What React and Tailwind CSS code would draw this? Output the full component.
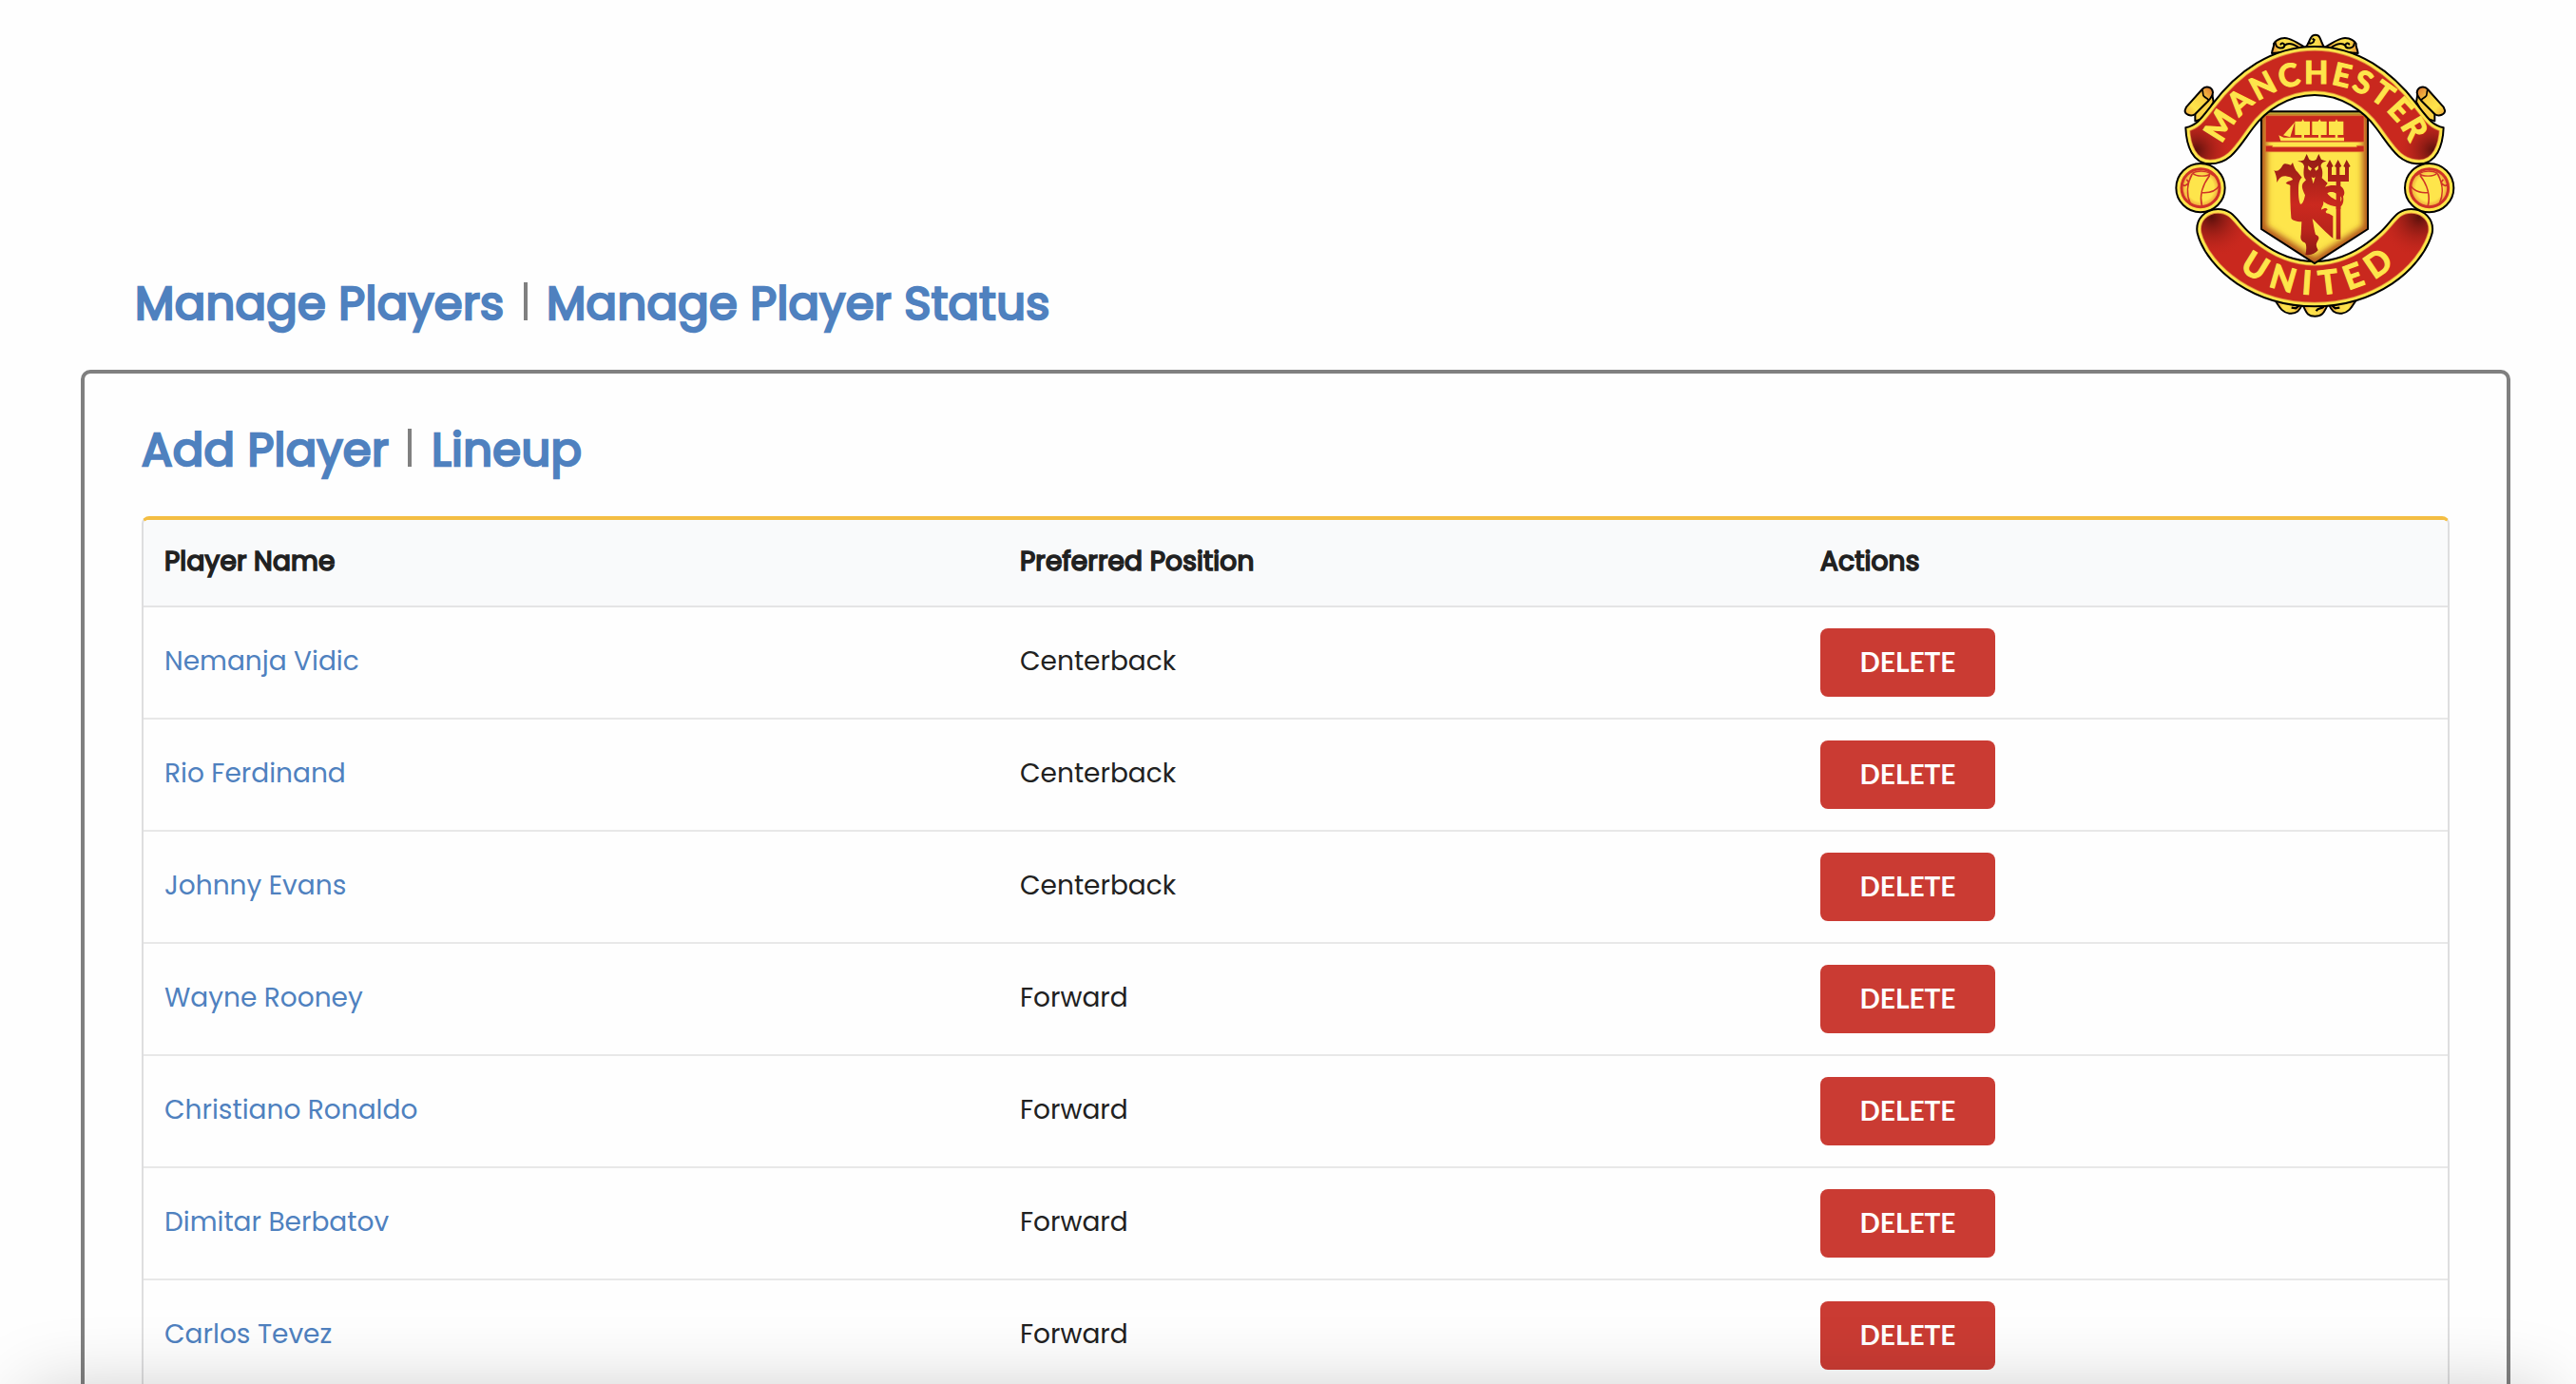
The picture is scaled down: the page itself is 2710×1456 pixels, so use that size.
const players = [
  { name: "Nemanja Vidic", position: "Centerback" },
  { name: "Rio Ferdinand", position: "Centerback" },
  { name: "Johnny Evans", position: "Centerback" },
  { name: "Wayne Rooney", position: "Forward" },
  { name: "Christiano Ronaldo", position: "Forward" },
  { name: "Dimitar Berbatov", position: "Forward" },
  { name: "Carlos Tevez", position: "Forward" },
];

const TOP_RIBBON =
  "M88 343 C125 335 140 310 170 272 C250 165 360 87 495 87 C630 87 740 165 820 272 C850 310 865 335 902 343 C900 400 880 457 825 457 C760 457 735 405 690 345 C650 290 580 240 495 240 C410 240 340 290 300 345 C255 405 230 457 165 457 C110 457 90 400 88 343Z";
const BOTTOM_RIBBON =
  "M125 676 C117 632 150 600 190 600 C240 600 250 640 290 675 C350 730 420 765 495 765 C570 765 640 730 700 675 C740 640 750 600 800 600 C840 600 874 632 866 676 C850 735 800 795 740 835 C660 888 580 907 495 907 C410 907 330 888 250 835 C190 795 140 735 125 676Z";
const SHIELD = "M327 292 H663 V663 L495 771 L327 663Z";

function Ribbon({ d, clip, shade }) {
  return (
    <g>
      <path d={d} fill="#c9281e" />
      <path d={d} fill={`url(#${shade}-left)`} />
      <path d={d} fill={`url(#${shade}-right)`} />
      <g clipPath={`url(#${clip})`} fill="none">
        <path d={d} stroke="#e08a3a" strokeWidth="28" />
        <path d={d} stroke="#fee54b" strokeWidth="23" />
      </g>
      <path d={d} fill="none" stroke="#000" strokeWidth="6" strokeLinejoin="round" />
    </g>
  );
}

function Ball() {
  return (
    <g fill="none" stroke="#cf3427" strokeLinecap="round">
      <circle cx="135" cy="533" r="77" fill="#fee54b" stroke="#000" strokeWidth="6" />
      <circle cx="135" cy="533" r="60" fill="url(#ball)" strokeWidth="9" />
      <path d="M110 486 C125 478 150 478 166 487 C160 498 120 499 110 486Z" strokeWidth="4" />
      <path d="M108 490 C92 520 90 555 103 583 M163 495 C140 525 132 560 139 588 M139 548 C165 550 185 540 194 526 M92 508 L98 516 C90 526 84 528 80 524" strokeWidth="5" />
      <path d="M166 487 L176 494" strokeWidth="4" />
    </g>
  );
}

function SideScroll() {
  return (
    <g stroke="#000" strokeWidth="6" strokeLinejoin="round">
      <path d="M118 322 L118 300 L150 258 L172 238 L176 262 L160 290 L136 316Z" fill="#fbd245" />
      <path d="M90 278 L140 222 C150 210 172 212 174 232 C174 246 166 250 160 258 L118 300 C104 310 84 300 86 288Z" fill="url(#scroll)" />
      <path d="M140 224 C146 230 138 240 148 246 C154 250 162 252 160 258" fill="none" strokeWidth="5" />
    </g>
  );
}

function UpperFlourish() {
  return (
    <g>
      <path
        d="M360 108 C362 92 368 88 366 78 C378 60 400 58 412 62 C432 68 448 80 462 88 L462 100Z"
        fill="url(#flourish)" stroke="#000" strokeWidth="6" strokeLinejoin="round"
      />
      <path d="M372 78 C374 94 398 96 400 84 C400 76 390 74 388 80 M400 84 C412 72 432 82 442 88" fill="none" stroke="#000" strokeWidth="6" strokeLinecap="round" />
    </g>
  );
}

function LowerFlourish() {
  return (
    <g>
      <path
        d="M370 888 C380 900 388 926 415 929 C440 932 448 918 456 902Z"
        fill="url(#flourish)" stroke="#000" strokeWidth="6" strokeLinejoin="round"
      />
      <path d="M422 911 L436 913 L446 904" fill="none" stroke="#000" strokeWidth="7" />
    </g>
  );
}

function Crest() {
  return (
    <svg viewBox="0 0 990 990" className="size-[330px]" role="img" aria-label="Manchester United">
      <defs>
        <clipPath id="clip-top"><path d={TOP_RIBBON} /></clipPath>
        <clipPath id="clip-bottom"><path d={BOTTOM_RIBBON} /></clipPath>
        <clipPath id="clip-shield"><path d={SHIELD} /></clipPath>
        <radialGradient id="top-left" gradientUnits="userSpaceOnUse" cx="120" cy="415" r="115">
          <stop offset="0" stopColor="#5a100b" /><stop offset="1" stopColor="#c9281e" stopOpacity="0" />
        </radialGradient>
        <radialGradient id="top-right" gradientUnits="userSpaceOnUse" cx="870" cy="415" r="115">
          <stop offset="0" stopColor="#5a100b" /><stop offset="1" stopColor="#c9281e" stopOpacity="0" />
        </radialGradient>
        <radialGradient id="bottom-left" gradientUnits="userSpaceOnUse" cx="170" cy="625" r="130">
          <stop offset="0" stopColor="#5a100b" /><stop offset="1" stopColor="#c9281e" stopOpacity="0" />
        </radialGradient>
        <radialGradient id="bottom-right" gradientUnits="userSpaceOnUse" cx="825" cy="625" r="130">
          <stop offset="0" stopColor="#5a100b" /><stop offset="1" stopColor="#c9281e" stopOpacity="0" />
        </radialGradient>
        <radialGradient id="ball">
          <stop offset="0.7" stopColor="#fee54b" /><stop offset="1" stopColor="#ee9a38" />
        </radialGradient>
        <linearGradient id="scroll" x1="0" y1="1" x2="1" y2="0">
          <stop offset="0" stopColor="#f0a43c" /><stop offset="0.3" stopColor="#fee54b" /><stop offset="0.6" stopColor="#fbd245" /><stop offset="1" stopColor="#dc6f30" />
        </linearGradient>
        <linearGradient id="flourish" x1="0" y1="0" x2="1" y2="0">
          <stop offset="0" stopColor="#e88b38" /><stop offset="0.3" stopColor="#fee54b" /><stop offset="0.7" stopColor="#fbd64a" /><stop offset="1" stopColor="#e88b38" />
        </linearGradient>
        <linearGradient id="devil" gradientUnits="userSpaceOnUse" x1="0" y1="425" x2="0" y2="748">
          <stop offset="0" stopColor="#8f1b14" /><stop offset="0.5" stopColor="#cb291f" /><stop offset="0.75" stopColor="#b9241b" /><stop offset="1" stopColor="#8a1a13" />
        </linearGradient>
        <filter id="soften" x="-10%" y="-10%" width="120%" height="120%"><feGaussianBlur stdDeviation="9" /></filter>
        <path id="arc-top" d="M203 396 A325 325 0 0 1 797 396" />
        <path id="arc-bottom" d="M257 789 A391 391 0 0 0 758 768" />
      </defs>

      <UpperFlourish />
      <g transform="translate(992 0) scale(-1 1)"><UpperFlourish /></g>
      <path d="M466 90 C476 80 476 70 484 58 C490 48 506 48 511 58 C518 72 518 78 526 90Z" fill="url(#flourish)" stroke="#000" strokeWidth="6" />
      <path d="M474 74 C482 80 492 76 494 66 L488 62" fill="none" stroke="#000" strokeWidth="6" />
      <LowerFlourish />
      <g transform="translate(996 0) scale(-1 1)"><LowerFlourish /></g>
      <path d="M458 904 C468 920 468 938 496 938 C524 938 526 920 536 904Z" fill="url(#flourish)" stroke="#000" strokeWidth="6" />
      <path d="M500 922 C506 910 514 916 524 908" fill="none" stroke="#000" strokeWidth="7" />
      <SideScroll />
      <g transform="translate(992 0) scale(-1 1)"><SideScroll /></g>

      <Ribbon d={BOTTOM_RIBBON} clip="clip-bottom" shade="bottom" />

      <g>
        <path d={SHIELD} fill="#fee54b" />
        <g clipPath="url(#clip-shield)">
          <path d={SHIELD} fill="none" stroke="#b4581f" strokeWidth="34" filter="url(#soften)" />
          <path d="M327 298 H663" stroke="#b9a634" strokeWidth="6" />
          <path d="M340 305 H651 V388 H340Z M340 400 H362 V404 H628 V400 H651 V419 H340Z" fill="#c9281e" stroke="#e07a34" strokeWidth="2" />
        </g>
        <path d={SHIELD} fill="none" stroke="#000" strokeWidth="6" />
        <path
          d="M382 367 L398 374 H588 V385 H388Z M432 326 L396 367 L418 373Z M433 323 H454 L458 316 L462 323 H480 V366 H462 V374 H454 V366 H433Z M487 323 H506 L511 316 L515 323 H533 V366 H515 V374 H507 V366 H487Z M540 323 H560 L564 316 L568 323 H586 V366 H568 V374 H560 V366 H540Z"
          fill="#fee54b"
        />
        <path
          fill="url(#devil)"
          d="M367 477 C376 484 386 476 394 462 C402 452 410 460 420 461 L426 453 C430 466 434 478 442 484 L455 500 C446 508 444 520 444 540 C444 562 446 576 450 584 C458 586 462 570 465 556 C458 540 452 530 458 518 L468 508 C458 500 460 480 462 465 C460 454 452 450 441 449 C450 447 460 447 462 443 L470 426 L478 443 C484 448 494 448 500 443 L508 426 L516 443 L533 449 C520 450 514 458 515 466 C522 480 520 492 518 502 L536 518 L528 530 C540 524 556 524 563 526 V513 H537 V468 L532 465 L543 444 L554 465 L549 468 V492 H563 V468 L558 465 L569 444 L580 465 L574 468 V492 H591 V468 L586 465 L596 444 L608 465 L603 468 V513 H577 V527 C590 536 592 552 585 560 C588 576 584 588 577 592 V695 H563 V592 C548 590 530 582 522 576 C526 588 516 592 516 602 C528 594 534 596 536 602 C526 606 530 614 540 614 L553 622 V692 C532 676 508 650 488 630 C492 650 494 668 498 680 C508 684 512 690 504 702 C496 716 504 722 506 730 C496 740 484 748 466 744 C470 728 470 710 464 706 C450 700 450 690 452 680 L454 640 C436 638 422 636 421 626 C418 590 418 560 418 530 C420 520 412 524 404 518 C410 510 420 512 426 506 C420 496 408 498 400 496 C388 496 382 506 376 516 C376 500 372 490 367 477Z"
        />
        <path d="M535 550 C545 542 566 546 570 560 H578 C582 566 580 572 577 576 C562 572 542 562 535 550Z M474 463 L486 472 L482 479 L475 474Z M507 463 L495 472 L499 479 L506 474Z M485 499 L491 502 L497 499 L491 520Z" fill="#fee54b" />
        <path d="M563 545 H577 V600 H563Z" fill="#c2271d" />
      </g>

      <Ribbon d={TOP_RIBBON} clip="clip-top" shade="top" />
      <Ball />
      <g transform="translate(992 0) scale(-1 1)"><Ball /></g>

      <g className="font-['Lato'] font-bold" fill="#fee54b" stroke="#fee54b" strokeWidth="3.5">
        <text fontSize="99">
          <textPath href="#arc-top" textLength="744" lengthAdjust="spacing">MANCHESTER</textPath>
        </text>
        <text fontSize="104">
          <textPath href="#arc-bottom" textLength="530" lengthAdjust="spacing">UNITED</textPath>
        </text>
      </g>
    </svg>
  );
}

function TitleLink({ children }) {
  return (
    <a href="#" className="text-[48px] leading-[60px] tracking-[0.34px] text-[#4f81bf] [-webkit-text-stroke:2.5px_#4f81bf]">
      {children}
    </a>
  );
}

const COLUMNS = "grid grid-cols-[922px_842px_1fr] items-center";

export default function App() {
  return (
    <div className="relative flex h-[1456px] w-[2710px] flex-col overflow-hidden bg-[#fefefe] font-['Poppins','Inter',sans-serif] text-[28px] leading-10 text-[#212121]">
      <header className="flex h-[389px] shrink-0 justify-between pt-5 pr-[110px] pl-[142px]">
        <nav className="mt-[270px] flex h-[60px]">
          <TitleLink>Manage Players</TitleLink>
          <span className="mt-[7px] mr-5 ml-[20.4px] h-10 w-1 bg-[#808080]" />
          <TitleLink>Manage Player Status</TitleLink>
        </nav>
        <Crest />
      </header>

      <main className="mr-[69px] ml-[85px] h-[1200px] shrink-0 rounded-[10px] border-4 border-[#808080] px-[60px] pt-[51px]">
        <nav className="flex h-[60px]">
          <TitleLink>Add Player</TitleLink>
          <span className="mt-[7px] mr-[21px] ml-[19.8px] h-10 w-1 bg-[#808080]" />
          <TitleLink>Lineup</TitleLink>
        </nav>

        <section className="mt-[39px] h-[1100px] overflow-hidden rounded-t-lg border-x-2 border-t-4 border-x-[#dededf] border-t-[#f4be43]">
          <div className={`${COLUMNS} h-[92px] border-b-2 border-[#e4e4e5] bg-[#f9fafb] tracking-[0.15px] [-webkit-text-stroke:1.7px_#212121]`}>
            <span className="pb-[3px] pl-[22px]">Player Name</span>
            <span className="pb-[3px]">Preferred Position</span>
            <span className="pb-[3px]">Actions</span>
          </div>
          {players.map((p) => (
            <div key={p.name} className={`${COLUMNS} h-[118px] border-b-2 border-[#e8e8e8]`}>
              <a href="#" className="pb-[3px] pl-[22px] text-[#4f81bf]">{p.name}</a>
              <span className="pb-[3px]">{p.position}</span>
              <button className="h-[72px] w-[184px] rounded-lg bg-[#ca3b33] pb-0.5 font-['Lato'] leading-none font-bold text-white">
                DELETE
              </button>
            </div>
          ))}
        </section>
      </main>

      <div className="pointer-events-none absolute top-[1466px] right-[30px] left-[30px] h-40 shadow-[0_0_80px_0_rgba(0,0,0,0.22)]" />
    </div>
  );
}
